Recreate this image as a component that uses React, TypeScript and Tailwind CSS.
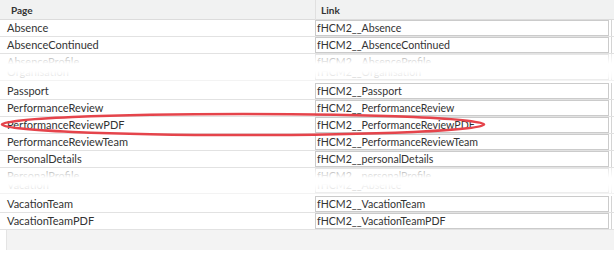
import React from 'react';

type Row = { page: string; link: string };

const topRows: Row[] = [
  { page: 'Absence', link: 'fHCM2__Absence' },
  { page: 'AbsenceContinued', link: 'fHCM2__AbsenceContinued' },
];

const midRows: Row[] = [
  { page: 'Passport', link: 'fHCM2__Passport' },
  { page: 'PerformanceReview', link: 'fHCM2__PerformanceReview' },
  { page: 'PerformanceReviewPDF', link: 'fHCM2__PerformanceReviewPDF' },
  { page: 'PerformanceReviewTeam', link: 'fHCM2__PerformanceReviewTeam' },
  { page: 'PersonalDetails', link: 'fHCM2__personalDetails' },
];

const bottomRows: Row[] = [
  { page: 'VacationTeam', link: 'fHCM2__VacationTeam' },
  { page: 'VacationTeamPDF', link: 'fHCM2__VacationTeamPDF' },
];

function TableRow({ row }: { row: Row }) {
  return (
    <div className="grid grid-cols-[315px_296px_3px] h-[17px] border-b border-[#e2e2e2] bg-white">
      <div className="pl-[7px] leading-[16px] text-[#333] truncate">{row.page}</div>
      <div className="h-[16px] border border-[#cbcbcb] pl-[1px] leading-[14px] text-[10.6px] text-[#333] truncate mr-[2px]">
        {row.link}
      </div>
      <div className="border-l border-[#d4d4d4]" />
    </div>
  );
}

// row cut off at the bottom, fading out
function FadeOut({ row }: { row: Row }) {
  return (
    <div className="relative h-[10px] overflow-hidden">
      <TableRow row={row} />
      <div className="absolute inset-0 bg-gradient-to-b from-white/50 to-white" />
    </div>
  );
}

// row cut off at the top, fading in
function FadeIn({ row }: { row: Row }) {
  return (
    <div className="relative h-[12px] overflow-hidden">
      <div className="-mt-[7px]">
        <TableRow row={row} />
      </div>
      <div className="absolute inset-0 bg-gradient-to-b from-white via-white/85 to-white/40" />
    </div>
  );
}

export default function App() {
  return (
    <div
      className="relative w-[614px] h-[255px] overflow-hidden bg-white text-[11px]"
      style={{ fontFamily: 'Lato, "Open Sans", sans-serif' }}
    >
      <div className="grid grid-cols-[315px_1fr] h-[20px] bg-[#f1f2f2] border-b border-[#dcdcdc] font-bold text-[10px] text-[#333]">
        <div className="pl-[11px] leading-[20px]">Page</div>
        <div className="pl-[5px] leading-[20px] border-l border-[#e0e0e0]">Link</div>
      </div>

      {topRows.map((r) => (
        <TableRow key={r.page} row={r} />
      ))}
      <FadeOut row={{ page: 'AbsenceProfile', link: 'fHCM2__AbsenceProfile' }} />
      <div className="h-[7px]" />
      <FadeIn row={{ page: 'Organisation', link: 'fHCM2__Organisation' }} />

      {midRows.map((r) => (
        <TableRow key={r.page} row={r} />
      ))}
      <FadeOut row={{ page: 'PersonalProfile', link: 'fHCM2__personalProfile' }} />
      <div className="h-[6px]" />
      <FadeIn row={{ page: 'Vacation', link: 'fHCM2__Absence' }} />

      {bottomRows.map((r) => (
        <TableRow key={r.page} row={r} />
      ))}
      <div className="h-[20px] ml-[6px] bg-[#f3f3f3] border-l border-[#e4e4e4]" />

      <svg className="absolute left-0 top-[112px] pointer-events-none" width="490" height="26" viewBox="0 0 490 26">
        <ellipse cx="243" cy="12.5" rx="241" ry="10.5" fill="none" stroke="#e5444b" strokeWidth="2.6" />
      </svg>
    </div>
  );
}
